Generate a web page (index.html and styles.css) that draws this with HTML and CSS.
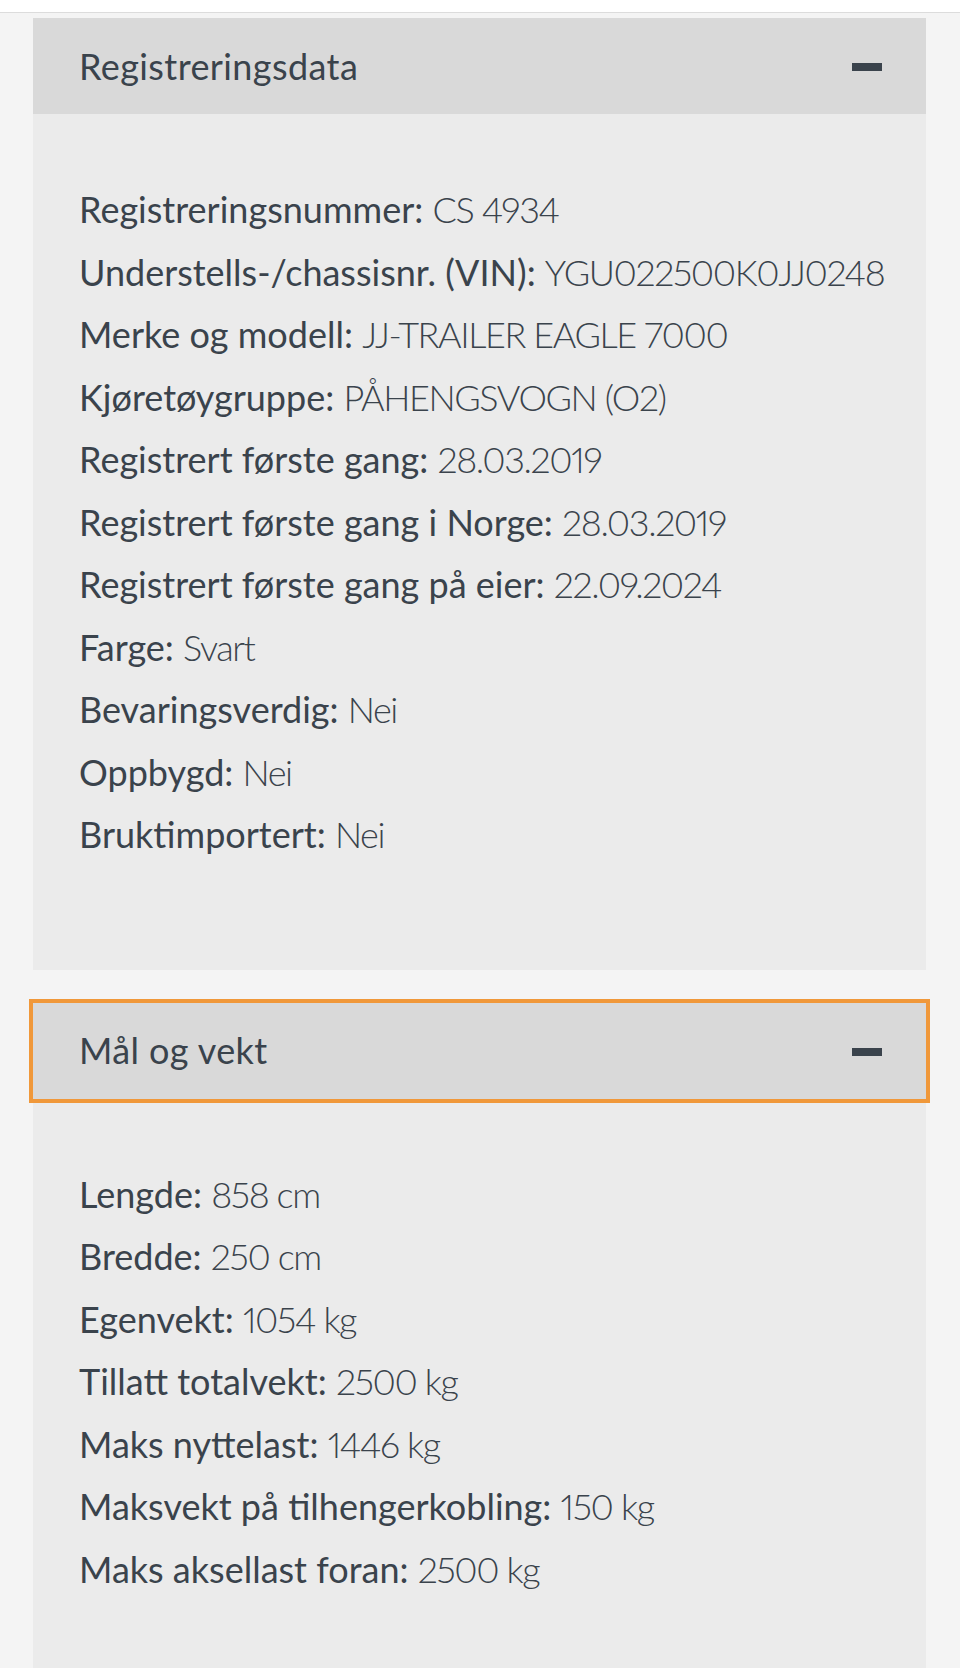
FILE: index.html
```html
<!DOCTYPE html>
<html lang="no">
<head>
<meta charset="utf-8">
<title>Kjøretøyopplysninger</title>
<link rel="stylesheet" href="styles.css">
</head>
<body>
<div class="topbar"></div>
<main class="content">
  <section class="panel">
    <div class="panel-head">
      <h2 class="panel-title">Registreringsdata</h2>
      <span class="minus"></span>
    </div>
    <div class="panel-body">
      <p class="row"><span class="lbl">Registreringsnummer:</span> <span class="val">CS 4934</span></p>
      <p class="row"><span class="lbl">Understells-/chassisnr. (VIN):</span> <span class="val">YGU022500K0JJ0248</span></p>
      <p class="row"><span class="lbl">Merke og modell:</span> <span class="val">JJ-TRAILER EAGLE 7000</span></p>
      <p class="row"><span class="lbl">Kjøretøygruppe:</span> <span class="val">PÅHENGSVOGN (O2)</span></p>
      <p class="row"><span class="lbl">Registrert første gang:</span> <span class="val">28.03.2019</span></p>
      <p class="row"><span class="lbl">Registrert første gang i Norge:</span> <span class="val">28.03.2019</span></p>
      <p class="row"><span class="lbl">Registrert første gang på eier:</span> <span class="val">22.09.2024</span></p>
      <p class="row"><span class="lbl">Farge:</span> <span class="val">Svart</span></p>
      <p class="row"><span class="lbl">Bevaringsverdig:</span> <span class="val">Nei</span></p>
      <p class="row"><span class="lbl">Oppbygd:</span> <span class="val">Nei</span></p>
      <p class="row"><span class="lbl">Bruktimportert:</span> <span class="val">Nei</span></p>
    </div>
  </section>
  <section class="panel">
    <div class="panel-head focused">
      <h2 class="panel-title">Mål og vekt</h2>
      <span class="minus"></span>
    </div>
    <div class="panel-body">
      <p class="row"><span class="lbl">Lengde:</span> <span class="val">858 cm</span></p>
      <p class="row"><span class="lbl">Bredde:</span> <span class="val">250 cm</span></p>
      <p class="row"><span class="lbl">Egenvekt:</span> <span class="val">1054 kg</span></p>
      <p class="row"><span class="lbl">Tillatt totalvekt:</span> <span class="val">2500 kg</span></p>
      <p class="row"><span class="lbl">Maks nyttelast:</span> <span class="val">1446 kg</span></p>
      <p class="row"><span class="lbl">Maksvekt på tilhengerkobling:</span> <span class="val">150 kg</span></p>
      <p class="row"><span class="lbl">Maks aksellast foran:</span> <span class="val">2500 kg</span></p>
    </div>
  </section>
</main>
</body>
</html>
```

FILE: styles.css
```css
html, body {
  margin: 0;
  padding: 0;
}
body {
  background: #f4f4f4;
  font-family: Lato, "Liberation Sans", sans-serif;
  color: #3a434c;
}
.topbar {
  height: 12px;
  background: #ffffff;
  border-bottom: 1px solid #dcdcdc;
}
.content {
  padding: 5px 34px 0 33px;
  display: flex;
  flex-direction: column;
  gap: 33px;
}
.panel {
  background: #ebebeb;
}
.panel-head {
  height: 96px;
  box-sizing: border-box;
  background: #d9d9d9;
  display: flex;
  align-items: center;
  justify-content: space-between;
  padding: 0 44px 0 46px;
}
.panel-head.focused {
  outline: 4px solid #f0983a;
}
.panel-title {
  margin: 0;
  font-size: 36px;
  font-weight: 400;
  line-height: 43px;
  letter-spacing: 0.4px;
}
.minus {
  width: 30px;
  height: 8px;
  background: #3a434c;
  margin-top: 2px;
}
.panel-body {
  padding: 64px 46px 104px;
}
.row {
  margin: 0;
  font-size: 36px;
  line-height: 62.5px;
  white-space: nowrap;
}
.lbl {
  font-weight: 400;
  letter-spacing: 0;
}
.val {
  font-weight: 300;
  letter-spacing: -1.4px;
  font-variant-numeric: proportional-nums;
}
```
